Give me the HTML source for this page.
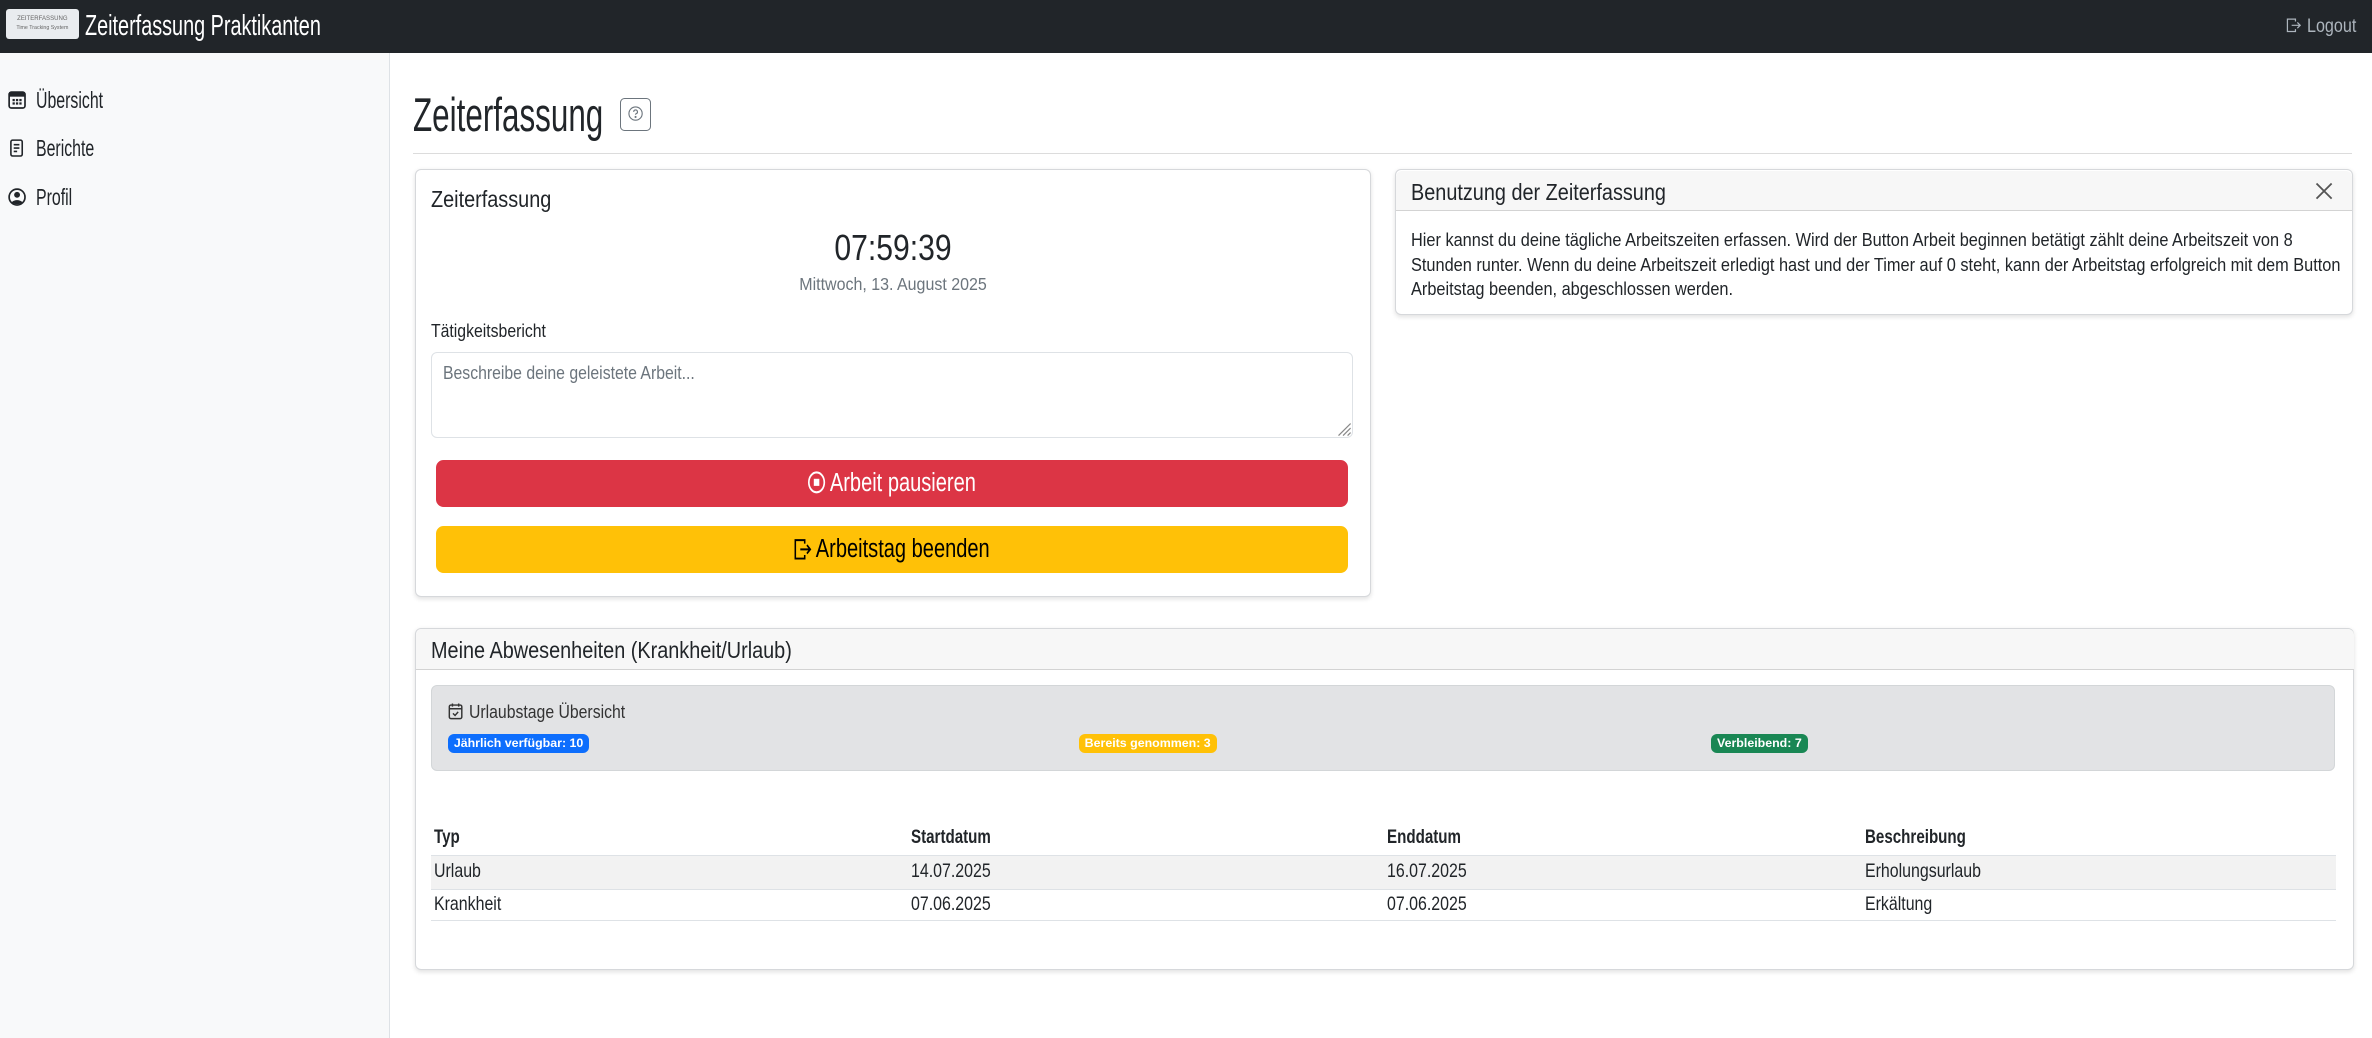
<!DOCTYPE html>
<html><head><meta charset="utf-8"><style>
html,body{margin:0;padding:0;background:#fff;overflow:hidden}
body{zoom:1.5128;width:1568px;height:686px;position:relative;font-family:"Liberation Sans",sans-serif;color:#212529}
.a{position:absolute;white-space:nowrap;transform-origin:0 0}
.nav{left:0;top:0;width:1568px;height:35px;background:#212529}
.logo{left:4px;top:6px;width:48px;height:20px;background:#e9ecef;border-radius:2px;font-size:4px;color:#666;text-align:center;line-height:6px;padding-top:4px;box-sizing:border-box}
.side{left:0;top:35px;width:257px;height:651px;background:#f8f9fa;border-right:1px solid #dee2e6}
.mi{left:24px;font-size:15px;line-height:16px;transform:scaleX(.7)}
.card{border:1px solid #d6d8db;border-radius:4px;background:#fff;box-shadow:0 1px 3px rgba(0,0,0,.12)}
.hdr{background:#f7f7f7;border-bottom:1px solid #d3d3d3;border-radius:4px 4px 0 0}
.btn{border-radius:5px;text-align:center;font-size:17px;line-height:31px}
.btn span{display:inline-block;transform:scaleX(.78)}
.badge{top:485px;height:13px;border-radius:4px;color:#fff;font-weight:bold;font-size:8.2px;line-height:13px;padding:0 4px}
.td{font-size:13px;line-height:22px;transform:scaleX(.81)}
.th{font-size:13px;line-height:22px;transform:scaleX(.77);font-weight:bold}
.ct{font-size:15px;line-height:18px;transform:scaleX(.875)}
</style></head><body>
<div class="a nav"></div>
<div class="a logo">ZEITERFASSUNG<br><span style="font-size:3.5px">Time Tracking System</span></div>
<div class="a" style="left:56px;top:5px;font-size:19px;line-height:24px;color:#fff;transform:scaleX(.69)">Zeiterfassung Praktikanten</div>
<svg class="a" style="left:1511px;top:11px" width="10" height="11" viewBox="0 0 16 16" fill="none" stroke="#adb5bd" stroke-width="1.3"><path d="M10 4V1.5H1.5v13H10V12"/><path d="M6 8h9M12 5l3 3-3 3"/></svg>
<div class="a" style="left:1525px;top:9px;font-size:13px;line-height:16px;color:#adb5bd;transform:scaleX(.82)">Logout</div>

<div class="a side"></div>
<svg class="a" style="left:5px;top:60px" width="12" height="12" viewBox="0 0 16 16"><rect x="1" y="1" width="14" height="14" rx="2" fill="none" stroke="#212529" stroke-width="1.5"/><rect x="1" y="1" width="14" height="4" fill="#212529"/><g fill="#212529"><rect x="4" y="7" width="2" height="2"/><rect x="7" y="7" width="2" height="2"/><rect x="10" y="7" width="2" height="2"/><rect x="4" y="10" width="2" height="2"/><rect x="7" y="10" width="2" height="2"/><rect x="10" y="10" width="2" height="2"/></g></svg>
<div class="a mi" style="top:58px">Übersicht</div>
<svg class="a" style="left:6px;top:92px" width="10" height="12" viewBox="0 0 12 16" fill="none" stroke="#212529" stroke-width="1.4"><rect x="1" y="1" width="10" height="14" rx="1.5"/><path d="M3.5 5h5M3.5 8h5M3.5 11h3"/></svg>
<div class="a mi" style="top:90px">Berichte</div>
<svg class="a" style="left:5px;top:124px" width="12" height="12" viewBox="0 0 16 16"><circle cx="8" cy="8" r="7" fill="none" stroke="#212529" stroke-width="1.5"/><circle cx="8" cy="6" r="2.6" fill="#212529"/><path d="M3.3 12.7C5 10 11 10 12.7 12.7 11 14.8 5 14.8 3.3 12.7z" fill="#212529"/></svg>
<div class="a mi" style="top:122px">Profil</div>

<div class="a" style="left:273px;top:58px;font-size:31px;line-height:36px;transform:scaleX(.67)">Zeiterfassung</div>
<div class="a" style="left:410px;top:65px;width:19px;height:20px;border:1px solid #6c757d;border-radius:3px"></div>
<svg class="a" style="left:415px;top:70px" width="10" height="10" viewBox="0 0 16 16" fill="none" stroke="#6c757d" stroke-width="1.2"><circle cx="8" cy="8" r="7"/><path d="M6 6.2a2 2 0 1 1 2.6 1.9c-.5.2-.6.6-.6 1.2"/><circle cx="8" cy="11.6" r=".5" fill="#6c757d"/></svg>
<div class="a" style="left:273px;top:101px;width:1282px;height:1px;background:#dcdcdc"></div>

<div class="a card" style="left:274px;top:112px;width:631px;height:281px"></div>
<div class="a ct" style="left:285px;top:123px">Zeiterfassung</div>
<div class="a" style="left:274px;top:150px;width:632px;text-align:center;font-size:24px;line-height:28px;transform:scaleX(.83);transform-origin:center">07:59:39</div>
<div class="a" style="left:274px;top:181px;width:632px;text-align:center;font-size:11.5px;line-height:14px;color:#6c757d;transform:scaleX(.92);transform-origin:center">Mittwoch, 13. August 2025</div>
<div class="a" style="left:285px;top:212px;font-size:12px;line-height:14px;transform:scaleX(.87)">Tätigkeitsbericht</div>
<div class="a" style="left:285px;top:233px;width:608px;height:55px;border:1px solid #dee2e6;border-radius:4px"></div>
<div class="a" style="left:293px;top:240px;font-size:12px;line-height:14px;color:#6c757d;transform:scaleX(.87)">Beschreibe deine geleistete Arbeit...</div>
<svg class="a" style="left:884px;top:279px" width="9" height="9" viewBox="0 0 9 9" stroke="#888" stroke-width=".8"><path d="M9 1L1 9M9 4L4 9M9 7L7 9"/></svg>
<div class="a btn" style="left:288px;top:304px;width:603px;height:31px;background:#dc3545;color:#fff"><span>
<svg width="15" height="15" viewBox="0 0 16 16" style="vertical-align:-2px"><circle cx="8" cy="8" r="7" fill="none" stroke="#fff" stroke-width="1.5"/><rect x="5.5" y="5.5" width="5" height="5" fill="#fff"/></svg> Arbeit pausieren</span></div>
<div class="a btn" style="left:288px;top:348px;width:603px;height:31px;background:#ffc107;color:#000"><span>
<svg width="15" height="15" viewBox="0 0 16 16" style="vertical-align:-2px" fill="none" stroke="#000" stroke-width="1.4"><path d="M10 4V1.5H1.5v13H10V12"/><path d="M6 8h9M12 5l3 3-3 3"/></svg> Arbeitstag beenden</span></div>

<div class="a card" style="left:922px;top:112px;width:632px;height:95px"></div>
<div class="a hdr" style="left:923px;top:113px;width:632px;height:26px"></div>
<div class="a ct" style="left:933px;top:118px">Benutzung der Zeiterfassung</div>
<svg class="a" style="left:1530px;top:120px" width="12" height="12" viewBox="0 0 12 12" stroke="#555" stroke-width="1.2"><path d="M1 1l10 10M11 1L1 11"/></svg>
<div class="a" style="left:933px;top:151px;font-size:12.2px;line-height:16px;transform:scaleX(.885)">Hier kannst du deine tägliche Arbeitszeiten erfassen. Wird der Button Arbeit beginnen betätigt zählt deine Arbeitszeit von 8<br>Stunden runter. Wenn du deine Arbeitszeit erledigt hast und der Timer auf 0 steht, kann der Arbeitstag erfolgreich mit dem Button<br>Arbeitstag beenden, abgeschlossen werden.</div>

<div class="a card" style="left:274px;top:415px;width:1281px;height:225px"></div>
<div class="a hdr" style="left:275px;top:416px;width:1281px;height:26px"></div>
<div class="a ct" style="left:285px;top:421px">Meine Abwesenheiten (Krankheit/Urlaub)</div>
<div class="a" style="left:285px;top:453px;width:1257px;height:55px;background:#e2e3e5;border:1px solid #d3d6d8;border-radius:4px"></div>
<svg class="a" style="left:296px;top:465px" width="10" height="11" viewBox="0 0 14 16" fill="none" stroke="#333" stroke-width="1.4"><rect x="1" y="2" width="12" height="13" rx="1.5"/><path d="M1 5.5h12M4 .5v3M10 .5v3M4.5 10l2 2 3-3.5"/></svg>
<div class="a" style="left:310px;top:464px;font-size:12px;line-height:14px;color:#333;transform:scaleX(.87)">Urlaubstage Übersicht</div>
<div class="a badge" style="left:296px;background:#0d6efd">Jährlich verfügbar: 10</div>
<div class="a badge" style="left:713px;background:#ffc107">Bereits genommen: 3</div>
<div class="a badge" style="left:1131px;background:#198754">Verbleibend: 7</div>

<div class="a" style="left:285px;top:565px;width:1259px;height:22px;background:#f2f2f2;border-top:1px solid #dee2e6;border-bottom:1px solid #dee2e6"></div>
<div class="a" style="left:285px;top:608px;width:1259px;height:1px;background:#dee2e6"></div>
<div class="a th" style="left:287px;top:543px">Typ</div>
<div class="a th" style="left:602px;top:543px">Startdatum</div>
<div class="a th" style="left:917px;top:543px">Enddatum</div>
<div class="a th" style="left:1233px;top:543px">Beschreibung</div>
<div class="a td" style="left:287px;top:565px">Urlaub</div>
<div class="a td" style="left:602px;top:565px">14.07.2025</div>
<div class="a td" style="left:917px;top:565px">16.07.2025</div>
<div class="a td" style="left:1233px;top:565px">Erholungsurlaub</div>
<div class="a td" style="left:287px;top:587px">Krankheit</div>
<div class="a td" style="left:602px;top:587px">07.06.2025</div>
<div class="a td" style="left:917px;top:587px">07.06.2025</div>
<div class="a td" style="left:1233px;top:587px">Erkältung</div>
</body></html>
